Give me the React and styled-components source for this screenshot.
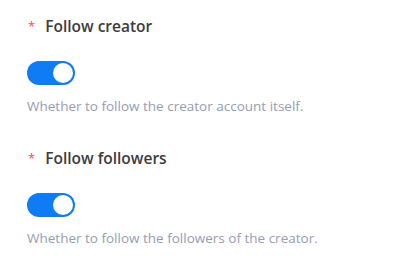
import React, { useState } from 'react'
import styled, { createGlobalStyle } from 'styled-components'

const GlobalStyle = createGlobalStyle`
	body {
		margin: 0;
		background: #ffffff;
		font-family: "Open Sans", "Noto Sans", sans-serif;
	}
`

const fields = [
	{ id: 'creator', label: 'Follow creator', help: 'Whether to follow the creator account itself.' },
	{ id: 'followers', label: 'Follow followers', help: 'Whether to follow the followers of the creator.' },
]

export const App = () => {
	const [values, setValues] = useState({ creator: true, followers: true })
	return (
		<Form>
			<GlobalStyle />
			{fields.map(field => (
				<Field key={field.id}>
					<Label>
						<Required>*</Required>
						{field.label}
					</Label>
					<Switch
						type="button"
						role="switch"
						aria-checked={values[field.id]}
						checked={values[field.id]}
						onClick={() => setValues({ ...values, [field.id]: !values[field.id] })}
					>
						<Knob checked={values[field.id]} />
					</Switch>
					<Help>{field.help}</Help>
				</Field>
			))}
		</Form>
	)
}
export default App

const Form = styled.div`
	padding: 16px 27px 0;
	display: flex;
	flex-direction: column;
	gap: 33px;
`
const Field = styled.div`
	display: flex;
	flex-direction: column;
	align-items: flex-start;
`
const Label = styled.div`
	font-size: 15.5px;
	font-weight: 600;
	color: #3c3c3c;
	line-height: 20px;
	display: flex;
	align-items: center;
`
const Required = styled.span`
	color: #ff4d4f;
	font-size: 13px;
	font-weight: 400;
	margin-right: 10px;
	margin-left: 1px;
`
const Switch = styled.button`
	margin-top: 25px;
	width: 48px;
	height: 24px;
	border: none;
	border-radius: 12px;
	padding: 0;
	background: ${({ checked }) => (checked ? '#0f7bf5' : '#c8c8c8')};
	position: relative;
	cursor: pointer;
`
const Knob = styled.span`
	position: absolute;
	top: 2px;
	left: ${({ checked }) => (checked ? '26px' : '2px')};
	width: 20px;
	height: 20px;
	border-radius: 50%;
	background: #ffffff;
`
const Help = styled.div`
	margin-top: 12px;
	font-size: 13.5px;
	line-height: 18px;
	color: #979cb3;
`
